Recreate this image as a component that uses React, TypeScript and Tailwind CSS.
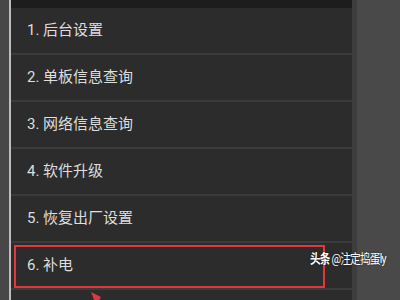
import React from "react";

const items = ["1. 后台设置", "2. 单板信息查询", "3. 网络信息查询", "4. 软件升级", "5. 恢复出厂设置", "6. 补电"];

export default function App() {
  return (
    <div
      className="relative flex w-[400px] h-[300px] overflow-hidden bg-[#484848]"
      style={{ fontFamily: 'Roboto, "Noto Sans CJK SC", sans-serif' }}
    >
      <div className="w-[9px] h-full bg-[#474747]" />
      <div className="w-[2px] h-full bg-[#bdbdbd]" />
      <div className="w-[341px] h-full flex flex-col bg-[#2c2c2c]">
        <div className="h-[8px] bg-[#1d1d1d] shrink-0" />
        {items.map((t, i) => (
          <div
            key={i}
            className="relative h-[47px] shrink-0 flex items-center pl-[16px] border-b-2 border-[#3b3b3b] text-[15px] text-[#dedede]"
          >
            <span>{t}</span>
            {i === 5 && (
              <div className="absolute left-[3px] top-[2px] w-[311px] h-[43px] border-2 border-[#e2373d]" />
            )}
          </div>
        ))}
      </div>
      <div className="w-[5px] h-full bg-[#3d3d3d]" />
      <div className="flex-1 h-full bg-[#494949]" />
      <div
        className="absolute left-[310px] top-[250px] text-[13px] leading-[18px] text-white whitespace-nowrap tracking-[-1px] origin-left scale-x-[0.82]"
        style={{ textShadow: "0 0 2px rgba(0,0,0,0.6)" }}
      >
        <span className="font-bold">头条</span> @注定捣蛋ly
      </div>
      <svg className="absolute left-[89px] top-[290px]" width="16" height="12" viewBox="0 0 16 12">
        <polygon points="2,2 12,7 9,12 6,12" fill="#e2373d" />
      </svg>
    </div>
  );
}
